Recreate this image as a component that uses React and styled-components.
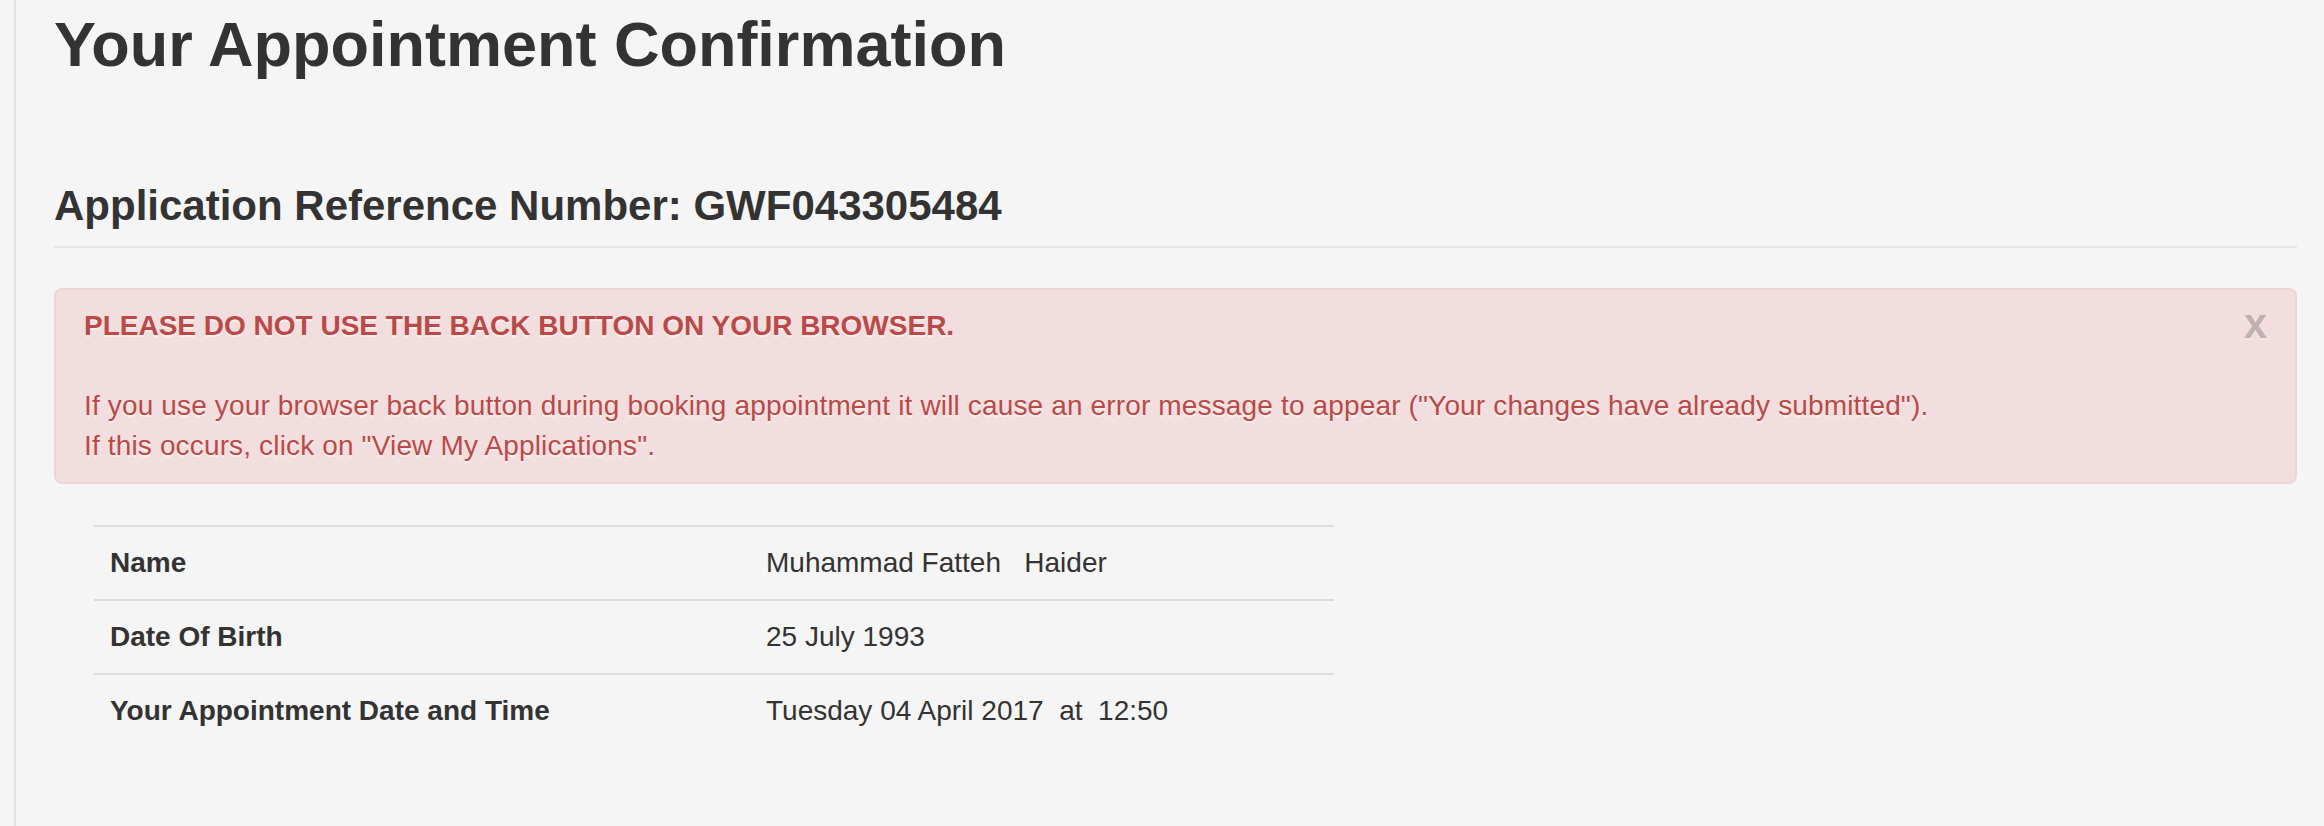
import styled, { createGlobalStyle } from 'styled-components';

const GlobalStyle = createGlobalStyle`
  html, body {
    margin: 0;
    padding: 0;
    background: #f5f5f5;
  }
  body {
    font-family: "Liberation Sans", Arial, Helvetica, sans-serif;
    font-size: 28px;
    line-height: 40px;
    color: #333;
  }
`;

const Page = styled.div`
  padding-left: 14px;
  min-height: 100vh;
  box-sizing: border-box;
`;

const Main = styled.main`
  min-height: 100vh;
  box-sizing: border-box;
  border-left: 2px solid #e3e3e3;
  padding: 10px 27px 40px 38px;
`;

const Title = styled.h1`
  margin: 0;
  font-size: 63px;
  line-height: 68px;
  font-weight: bold;
`;

const PageHeader = styled.div`
  margin-top: 105px;
  padding-bottom: 17px;
  border-bottom: 2px solid #e6e6e6;
`;

const RefHeading = styled.h2`
  margin: 0;
  font-size: 42px;
  line-height: 46px;
  font-weight: bold;
`;

const Alert = styled.div`
  display: flex;
  align-items: flex-start;
  margin-top: 40px;
  padding: 16px 28px;
  border: 2px solid #eed3d7;
  border-radius: 8px;
  background: #f2dede;
  color: #b94a48;
  text-shadow: 0 2px 0 rgba(255, 255, 255, 0.5);
`;

const AlertBody = styled.div`
  flex: 1;
`;

const AlertHeading = styled.strong`
  display: block;
  margin-bottom: 40px;
`;

const AlertText = styled.p`
  margin: 0;
  letter-spacing: 0.15px;
`;

const Close = styled.button`
  flex: none;
  margin: -3px 0 0;
  padding: 0;
  border: 0;
  background: none;
  font-family: inherit;
  font-size: 42px;
  line-height: 42px;
  font-weight: bold;
  color: #000;
  opacity: 0.2;
  text-shadow: 0 2px 0 #fff;
  cursor: pointer;
`;

const Table = styled.div`
  margin: 41px 0 0 40px;
  width: 1240px;
`;

const Row = styled.div`
  display: grid;
  grid-template-columns: 656px 1fr;
  border-top: 2px solid #ddd;
`;

const Cell = styled.div`
  padding: 16px;
  font-weight: ${p => (p.$label ? 'bold' : 'normal')};
  white-space: pre;
`;

const details = [
  ['Name', 'Muhammad Fatteh   Haider'],
  ['Date Of Birth', '25 July 1993'],
  ['Your Appointment Date and Time', 'Tuesday 04 April 2017  at  12:50'],
];

export default function App() {
  return (
    <Page>
      <GlobalStyle />
      <Main>
        <Title>Your Appointment Confirmation</Title>
        <PageHeader>
          <RefHeading>Application Reference Number: GWF043305484</RefHeading>
        </PageHeader>
        <Alert>
          <AlertBody>
            <AlertHeading>PLEASE DO NOT USE THE BACK BUTTON ON YOUR BROWSER.</AlertHeading>
            <AlertText>
              If you use your browser back button during booking appointment it will cause an error message to appear ("Your changes have already submitted").
              <br />
              If this occurs, click on "View My Applications".
            </AlertText>
          </AlertBody>
          <Close type="button">x</Close>
        </Alert>
        <Table>
          {details.map(([label, value]) => (
            <Row key={label}>
              <Cell $label>{label}</Cell>
              <Cell>{value}</Cell>
            </Row>
          ))}
        </Table>
      </Main>
    </Page>
  );
}
